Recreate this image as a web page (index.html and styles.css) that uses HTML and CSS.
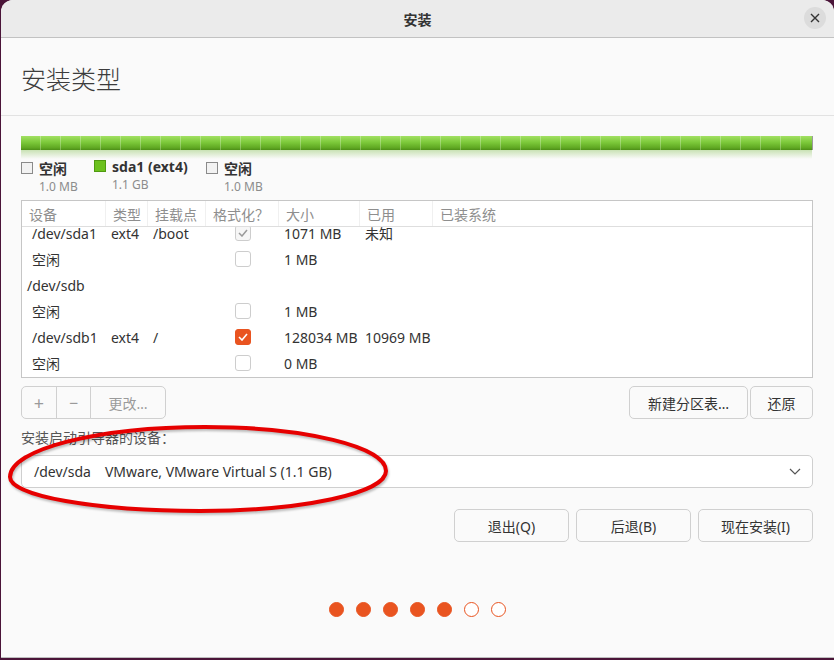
FILE: index.html
```html
<!DOCTYPE html>
<html lang="zh-CN">
<head>
  <meta charset="UTF-8" />
  <title>安装</title>
  <link rel="stylesheet" href="styles.css">
</head>
<body>
  <div class="window">
    <div class="titlebar">
      <span class="title">安装</span>
      <button class="close-btn">
        <svg width="10" height="10" viewBox="0 0 10 10"><path d="M1 1 L9 9 M9 1 L1 9" stroke="#333" stroke-width="1.4" fill="none"/></svg>
      </button>
    </div>

    <div class="page-title">安装类型</div>

    <div class="content">
      <div class="disk-bar"></div>

      <div class="legend">
        <div class="legend-item">
          <span class="swatch"></span>
          <div>
            <div class="legend-name">空闲</div>
            <div class="legend-size">1.0 MB</div>
          </div>
        </div>
        <div class="legend-item raised">
          <span class="swatch ext4"></span>
          <div>
            <div class="legend-name">sda1 (ext4)</div>
            <div class="legend-size">1.1 GB</div>
          </div>
        </div>
        <div class="legend-item">
          <span class="swatch"></span>
          <div>
            <div class="legend-name">空闲</div>
            <div class="legend-size">1.0 MB</div>
          </div>
        </div>
      </div>

      <div class="part-table">
        <div class="row head">
          <div>设备</div><div>类型</div><div>挂载点</div><div>格式化？</div><div>大小</div><div>已用</div><div>已装系统</div>
        </div>
        <div class="table-body">
          <div class="rows">
            <div class="row">
              <div class="child">/dev/sda1</div><div>ext4</div><div>/boot</div>
              <div class="cb-cell"><span class="cb disabled-on"><svg width="10" height="8" viewBox="0 0 10 8"><path d="M1 4 L4 7 L9 1" stroke="#9a9a9a" stroke-width="1.5" fill="none"/></svg></span></div>
              <div>1071 MB</div><div>未知</div><div></div>
            </div>
            <div class="row">
              <div class="child">空闲</div><div></div><div></div>
              <div class="cb-cell"><span class="cb"></span></div>
              <div>1 MB</div><div></div><div></div>
            </div>
            <div class="row">
              <div>/dev/sdb</div><div></div><div></div><div></div><div></div><div></div><div></div>
            </div>
            <div class="row">
              <div class="child">空闲</div><div></div><div></div>
              <div class="cb-cell"><span class="cb"></span></div>
              <div>1 MB</div><div></div><div></div>
            </div>
            <div class="row">
              <div class="child">/dev/sdb1</div><div>ext4</div><div>/</div>
              <div class="cb-cell"><span class="cb on"><svg width="10" height="8" viewBox="0 0 10 8"><path d="M1 4 L4 7 L9 1" stroke="#fff" stroke-width="1.6" fill="none"/></svg></span></div>
              <div>128034 MB</div><div>10969 MB</div><div></div>
            </div>
            <div class="row">
              <div class="child">空闲</div><div></div><div></div>
              <div class="cb-cell"><span class="cb"></span></div>
              <div>0 MB</div><div></div><div></div>
            </div>
          </div>
        </div>
      </div>

      <div class="table-actions">
        <div class="btn-group">
          <button class="btn seg plus">+</button>
          <button class="btn seg minus">−</button>
          <button class="btn seg change">更改…</button>
        </div>
        <div class="right-actions">
          <button class="btn new-table">新建分区表…</button>
          <button class="btn revert">还原</button>
        </div>
      </div>

      <div class="boot-label">安装启动引导器的设备：</div>
      <div class="combo">
        <span class="dev">/dev/sda</span>
        <span>VMware, VMware Virtual S (1.1 GB)</span>
        <svg class="chevron" width="12" height="7" viewBox="0 0 12 7"><path d="M1 1 L6 6 L11 1" stroke="#555" stroke-width="1.2" fill="none"/></svg>
      </div>

      <div class="nav-buttons">
        <button class="btn nav">退出(Q)</button>
        <button class="btn nav">后退(B)</button>
        <button class="btn nav">现在安装(I)</button>
      </div>

      <div class="steps">
        <span class="dot done"></span>
        <span class="dot done"></span>
        <span class="dot done"></span>
        <span class="dot done"></span>
        <span class="dot done"></span>
        <span class="dot"></span>
        <span class="dot"></span>
      </div>
    </div>

    <!-- hand-drawn red loop around the boot device selector -->
    <svg class="marker" width="834" height="658" viewBox="0 0 834 658">
      <path d="M10 477 C10 449.4 97.4 427 205 427 C305 427 386 446.7 386 471 C386 493 302.7 511 200 511 C95 511 10 495.8 10 477 Z" fill="none" stroke="#e60000" stroke-width="4"/>
    </svg>
  </div>
</body>
</html>
```

FILE: styles.css
```css
* {
  box-sizing: border-box;
}

body {
  margin: 0;
  background: #4a1438;
  font-family: "Noto Sans", "Noto Sans CJK SC", sans-serif;
  font-size: 14px;
  color: #333;
}

.window {
  position: relative;
  margin-left: 1px;
  height: 658px;
  background: #fafafa;
  border-radius: 12px 12px 0 0;
  border-bottom: 1px solid #bdbdbd;
  overflow: hidden;
}

/* header bar */
.titlebar {
  position: relative;
  height: 38px;
  background: #ebebeb;
  border-bottom: 1px solid #c2c2c2;
  display: flex;
  align-items: center;
  justify-content: center;
}

.title {
  font-weight: bold;
  font-size: 14px;
  color: #333;
}

.close-btn {
  position: absolute;
  right: 8px;
  top: 7px;
  width: 22px;
  height: 22px;
  border: none;
  border-radius: 50%;
  background: #dcdcdc;
  padding: 0;
  display: flex;
  align-items: center;
  justify-content: center;
}

.page-title {
  height: 78px;
  padding-left: 20px;
  padding-top: 3px;
  display: flex;
  align-items: center;
  font-size: 25px;
  font-weight: 300;
  color: #3c3c3c;
  border-bottom: 1px solid #e2e2e2;
}

.content {
  padding: 20px 21px 0 20px;
}

/* disk usage bar */
.disk-bar {
  position: relative;
  height: 14px;
  border-right: 1px solid #9a9a9a;
  background:
    repeating-linear-gradient(90deg, transparent 0 19px, rgba(255, 255, 255, 0.28) 19px 20px),
    linear-gradient(#a2e063, #7cc93a 45%, #5fa722 85%, #4c8e17);
}

.disk-bar::after {
  content: "";
  position: absolute;
  left: 0;
  right: 0;
  top: 14px;
  height: 9px;
  background: linear-gradient(rgba(110, 180, 50, 0.35), rgba(250, 250, 250, 0));
}

.legend {
  display: grid;
  grid-template-columns: 73px 112px auto;
  margin-top: 10px;
  height: 37px;
}

.legend-item {
  display: flex;
  gap: 6px;
  align-items: flex-start;
}

.legend-item.raised {
  margin-top: -2px;
}

.swatch {
  width: 12px;
  height: 12px;
  margin-top: 2px;
  border: 1px solid #8a8a8a;
  background: #f2f2f2;
}

.swatch.ext4 {
  background: #6cc11d;
  border-color: #4f9a10;
}

.legend-name {
  font-weight: bold;
  font-size: 14px;
  line-height: 18px;
  color: #333;
}

.legend-size {
  font-size: 12px;
  color: #8c8c8c;
  line-height: 16px;
  margin-top: 1px;
}

/* partition table */
.part-table {
  margin-top: 3px;
  border: 1px solid #c6c6c6;
  background: #fff;
}

.row {
  display: grid;
  grid-template-columns: 84px 42px 58px 73px 81px 73px 1fr;
  height: 26px;
  align-items: center;
  white-space: nowrap;
}

.row > div {
  padding-left: 5px;
}

.row .child {
  padding-left: 10px;
}

.row.head {
  height: 26px;
  color: #8e8e8e;
  border-bottom: 1px solid #dedede;
  background: #fff;
}

.row.head > div {
  padding-left: 7px;
  height: 100%;
  display: flex;
  align-items: center;
  border-right: 1px solid #f0f0f0;
}

.row.head > div:last-child {
  border-right: none;
}

.table-body {
  height: 150px;
  overflow: hidden;
}

.rows {
  margin-top: -7px;
}

.cb-cell {
  display: flex;
  align-items: center;
}

.cb {
  width: 16px;
  height: 16px;
  margin-left: 24px;
  border: 1px solid #cdcdcd;
  border-radius: 3px;
  background: #fff;
  display: flex;
  align-items: center;
  justify-content: center;
}

.cb.disabled-on {
  background: #f6f6f6;
}

.cb.on {
  background: #e95420;
  border-color: #e95420;
}

/* buttons */
.btn {
  font-family: inherit;
  font-size: 14px;
  height: 33px;
  background: #fafafa;
  border: 1px solid #d0d0d0;
  border-radius: 5px;
  color: #333;
  padding: 0;
}

.table-actions {
  display: flex;
  justify-content: space-between;
  margin-top: 8px;
}

.btn-group {
  display: flex;
}

.btn.seg {
  color: #9a9a9a;
  border-radius: 0;
  margin-left: -1px;
}

.btn.plus {
  width: 36px;
  margin-left: 0;
  border-radius: 5px 0 0 5px;
  font-size: 18px;
}

.btn.minus {
  width: 35px;
  font-size: 16px;
}

.btn.change {
  width: 76px;
  border-radius: 0 5px 5px 0;
}

.right-actions {
  display: flex;
  gap: 2px;
}

.btn.new-table {
  width: 119px;
}

.btn.revert {
  width: 63px;
}

.boot-label {
  margin-top: 9px;
  color: #555;
  line-height: 20px;
}

.combo {
  margin-top: 7px;
  height: 33px;
  background: #fff;
  border: 1px solid #cfcfcf;
  border-radius: 5px;
  display: flex;
  align-items: center;
  padding: 0 11px 0 12px;
  color: #333;
}

.combo .dev {
  margin-right: 14px;
}

.chevron {
  margin-left: auto;
}

.nav-buttons {
  display: flex;
  justify-content: flex-end;
  gap: 7px;
  margin-top: 21px;
}

.btn.nav {
  width: 115px;
}

/* progress dots */
.steps {
  display: flex;
  justify-content: center;
  gap: 12px;
  margin-top: 60px;
  padding-left: 1px;
}

.dot {
  width: 15px;
  height: 15px;
  border-radius: 50%;
  border: 1.5px solid #e95420;
  background: #fff;
}

.dot.done {
  background: #e95420;
}

.marker {
  position: absolute;
  left: -1px;
  top: 0;
  pointer-events: none;
  filter: drop-shadow(1px 2px 1px rgba(0, 0, 0, 0.25));
}
```
